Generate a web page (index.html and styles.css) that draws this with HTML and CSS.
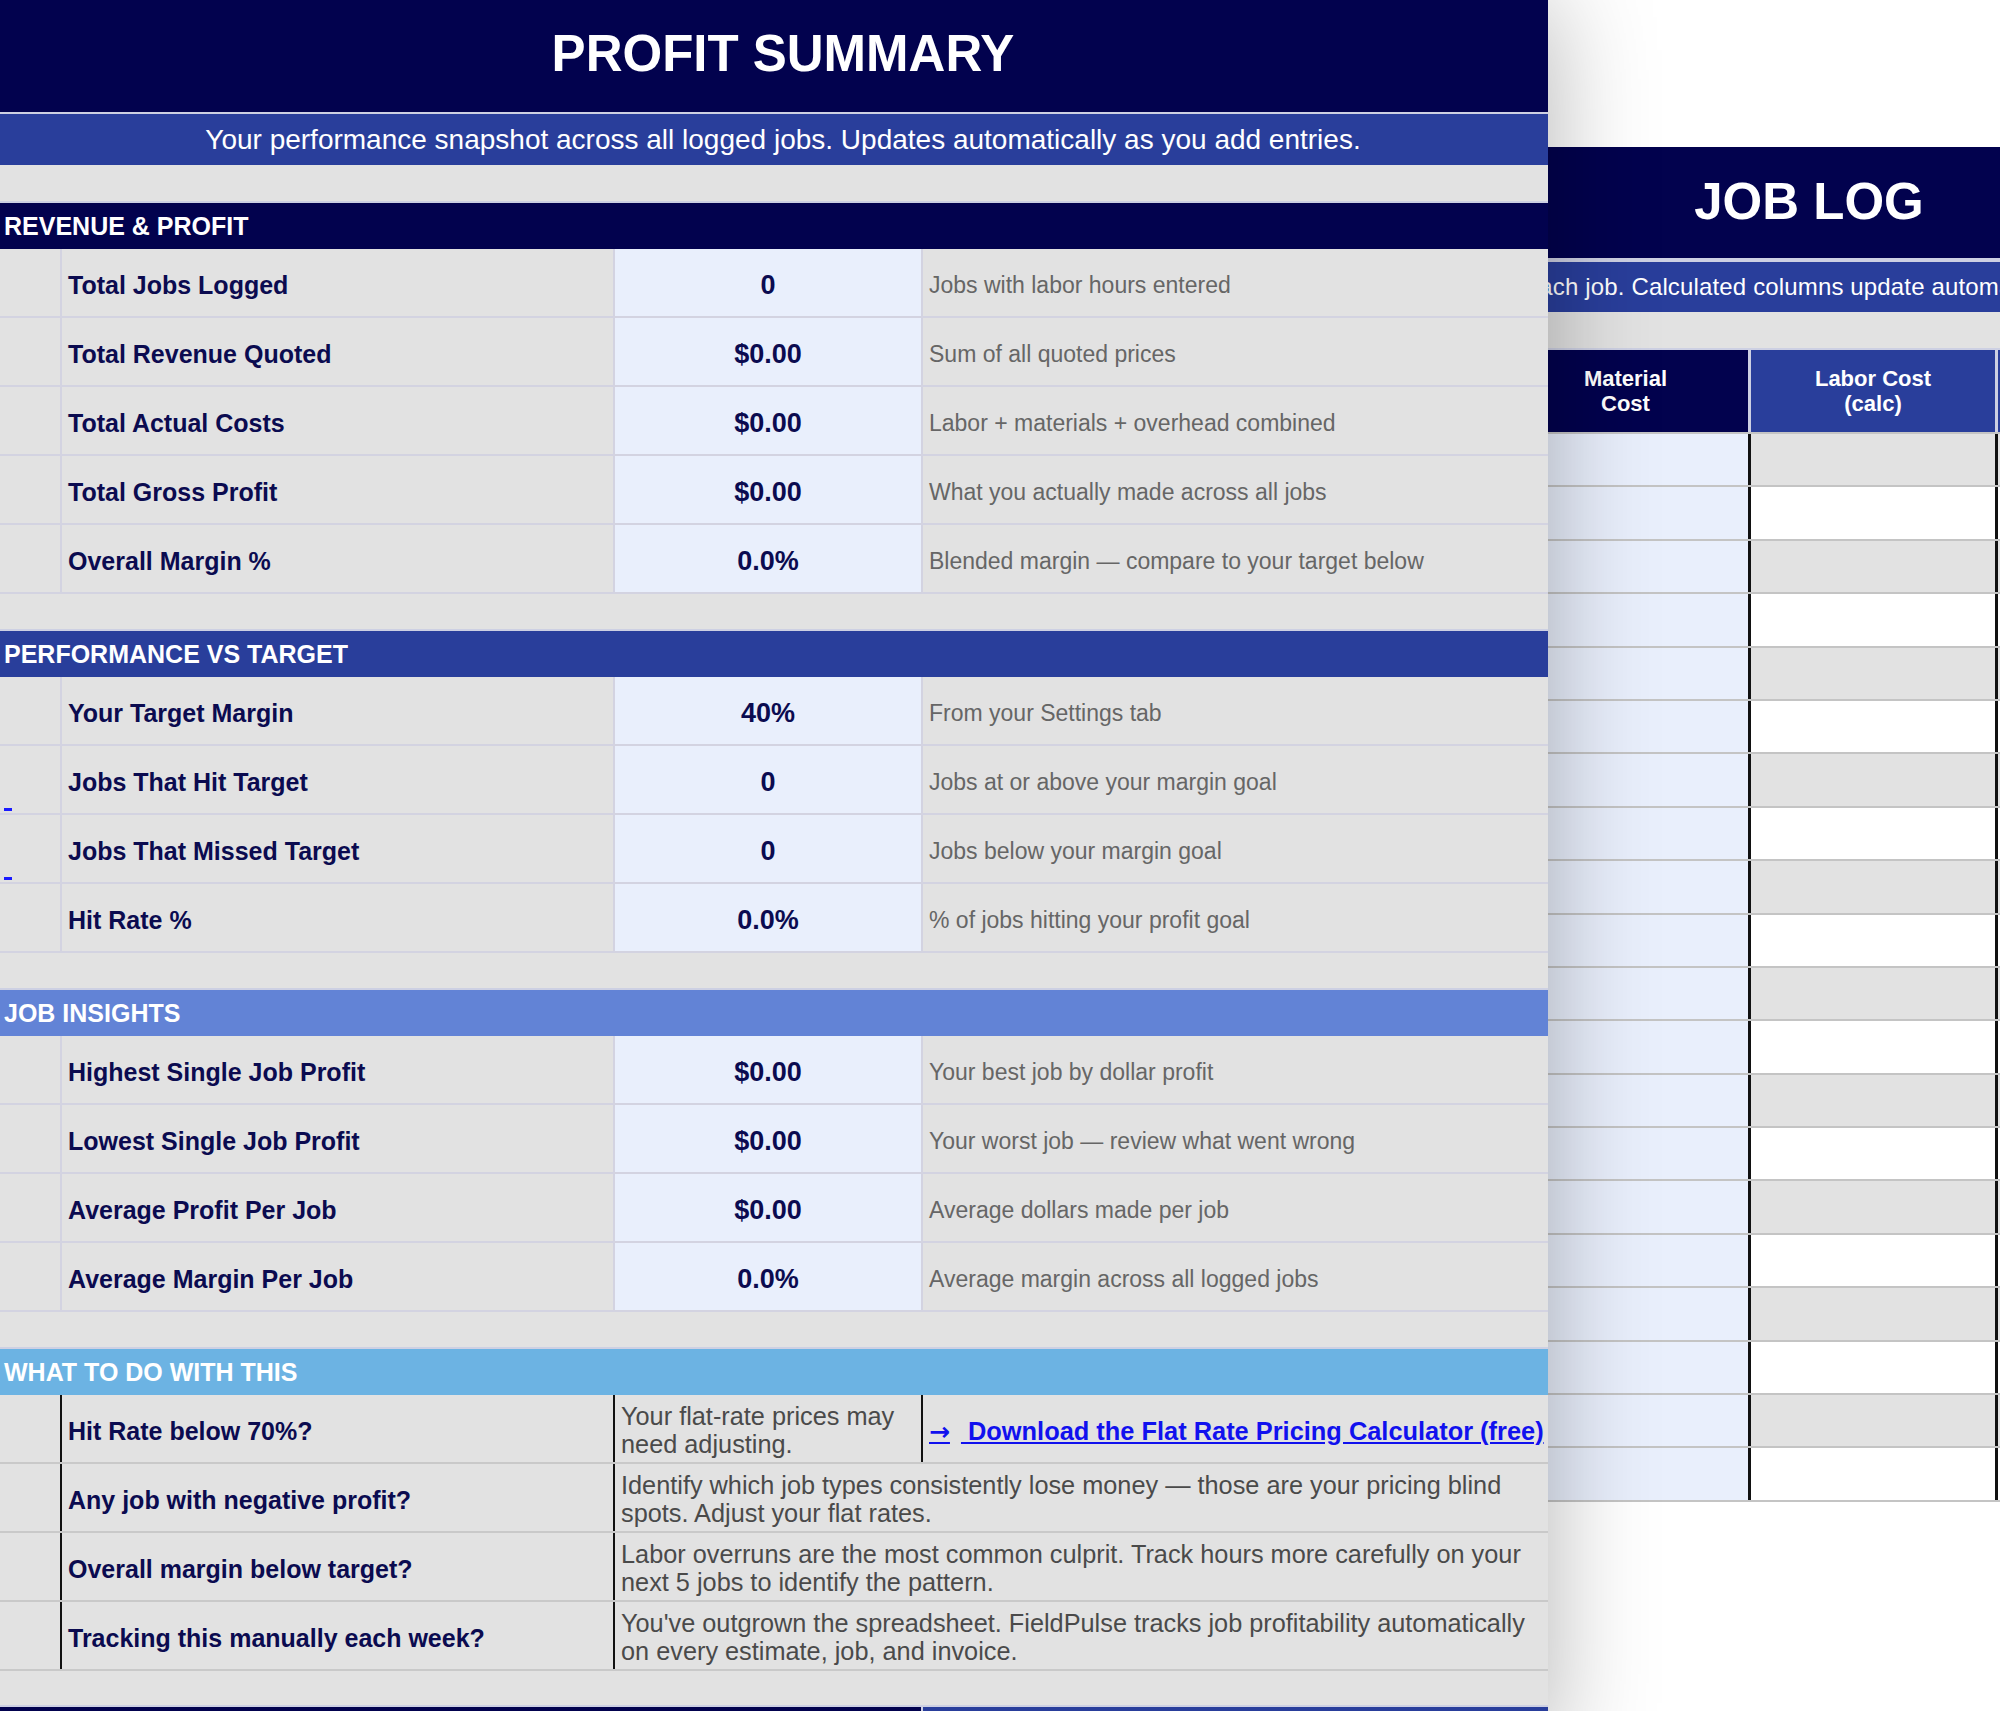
FILE: index.html
```html
<!DOCTYPE html>
<html lang="en">
<head>
<meta charset="utf-8">
<title>Profit Summary</title>
<link rel="stylesheet" href="styles.css">
</head>
<body>
<div class="main">
  <div class="title">PROFIT SUMMARY</div>
  <div class="subtitle">Your performance snapshot across all logged jobs. Updates automatically as you add entries.</div>
  <div class="gap gap-first"></div>

  <div class="sec-head navy">REVENUE &amp; PROFIT</div>
  <div class="row"><div class="ca"></div><div class="cb">Total Jobs Logged</div><div class="cc">0</div><div class="cd">Jobs with labor hours entered</div></div>
  <div class="row"><div class="ca"></div><div class="cb">Total Revenue Quoted</div><div class="cc">$0.00</div><div class="cd">Sum of all quoted prices</div></div>
  <div class="row"><div class="ca"></div><div class="cb">Total Actual Costs</div><div class="cc">$0.00</div><div class="cd">Labor + materials + overhead combined</div></div>
  <div class="row"><div class="ca"></div><div class="cb">Total Gross Profit</div><div class="cc">$0.00</div><div class="cd">What you actually made across all jobs</div></div>
  <div class="row"><div class="ca"></div><div class="cb">Overall Margin %</div><div class="cc">0.0%</div><div class="cd">Blended margin — compare to your target below</div></div>
  <div class="gap"></div>

  <div class="sec-head blue">PERFORMANCE VS TARGET</div>
  <div class="row"><div class="ca"></div><div class="cb">Your Target Margin</div><div class="cc">40%</div><div class="cd">From your Settings tab</div></div>
  <div class="row"><div class="ca"><span class="mark"></span></div><div class="cb">Jobs That Hit Target</div><div class="cc">0</div><div class="cd">Jobs at or above your margin goal</div></div>
  <div class="row"><div class="ca"><span class="mark"></span></div><div class="cb">Jobs That Missed Target</div><div class="cc">0</div><div class="cd">Jobs below your margin goal</div></div>
  <div class="row"><div class="ca"></div><div class="cb">Hit Rate %</div><div class="cc">0.0%</div><div class="cd">% of jobs hitting your profit goal</div></div>
  <div class="gap"></div>

  <div class="sec-head periwinkle">JOB INSIGHTS</div>
  <div class="row"><div class="ca"></div><div class="cb">Highest Single Job Profit</div><div class="cc">$0.00</div><div class="cd">Your best job by dollar profit</div></div>
  <div class="row"><div class="ca"></div><div class="cb">Lowest Single Job Profit</div><div class="cc">$0.00</div><div class="cd">Your worst job — review what went wrong</div></div>
  <div class="row"><div class="ca"></div><div class="cb">Average Profit Per Job</div><div class="cc">$0.00</div><div class="cd">Average dollars made per job</div></div>
  <div class="row"><div class="ca"></div><div class="cb">Average Margin Per Job</div><div class="cc">0.0%</div><div class="cd">Average margin across all logged jobs</div></div>
  <div class="gap"></div>

  <div class="sec-head sky">WHAT TO DO WITH THIS</div>
  <div class="wrow"><div class="wa"></div><div class="wb">Hit Rate below 70%?</div><div class="wc">Your flat-rate prices may need adjusting.</div><div class="wd"><span class="link"><span class="arrow">→</span> Download the Flat Rate Pricing Calculator (free)</span></div></div>
  <div class="wrow"><div class="wa"></div><div class="wb">Any job with negative profit?</div><div class="wspan">Identify which job types consistently lose money — those are your pricing blind spots. Adjust your flat rates.</div></div>
  <div class="wrow"><div class="wa"></div><div class="wb">Overall margin below target?</div><div class="wspan">Labor overruns are the most common culprit. Track hours more carefully on your next 5 jobs to identify the pattern.</div></div>
  <div class="wrow"><div class="wa"></div><div class="wb">Tracking this manually each week?</div><div class="wspan">You've outgrown the spreadsheet. FieldPulse tracks job profitability automatically on every estimate, job, and invoice.</div></div>
  <div class="gap gap-last"></div>
  <div class="foot"><div class="foot-a"></div><div class="foot-b"></div></div>
</div>

<div class="joblog">
  <div class="jl-title">JOB LOG</div>
  <div class="jl-sub">Log one row for each job. Calculated columns update automatically.</div>
  <div class="jl-gap"></div>
  <div class="jl-head">
    <div class="h-blank"></div>
    <div class="h-mat">Material<br>Cost</div>
    <div class="h-lab">Labor Cost<br>(calc)</div>
    <div class="h-next"></div>
  </div>
  <div class="jl-row odd"><div></div><div class="r-mat"></div><div class="r-lab"></div><div class="r-next"></div></div>
  <div class="jl-row even"><div></div><div class="r-mat"></div><div class="r-lab"></div><div class="r-next"></div></div>
  <div class="jl-row odd"><div></div><div class="r-mat"></div><div class="r-lab"></div><div class="r-next"></div></div>
  <div class="jl-row even"><div></div><div class="r-mat"></div><div class="r-lab"></div><div class="r-next"></div></div>
  <div class="jl-row odd"><div></div><div class="r-mat"></div><div class="r-lab"></div><div class="r-next"></div></div>
  <div class="jl-row even"><div></div><div class="r-mat"></div><div class="r-lab"></div><div class="r-next"></div></div>
  <div class="jl-row odd"><div></div><div class="r-mat"></div><div class="r-lab"></div><div class="r-next"></div></div>
  <div class="jl-row even"><div></div><div class="r-mat"></div><div class="r-lab"></div><div class="r-next"></div></div>
  <div class="jl-row odd"><div></div><div class="r-mat"></div><div class="r-lab"></div><div class="r-next"></div></div>
  <div class="jl-row even"><div></div><div class="r-mat"></div><div class="r-lab"></div><div class="r-next"></div></div>
  <div class="jl-row odd"><div></div><div class="r-mat"></div><div class="r-lab"></div><div class="r-next"></div></div>
  <div class="jl-row even"><div></div><div class="r-mat"></div><div class="r-lab"></div><div class="r-next"></div></div>
  <div class="jl-row odd"><div></div><div class="r-mat"></div><div class="r-lab"></div><div class="r-next"></div></div>
  <div class="jl-row even"><div></div><div class="r-mat"></div><div class="r-lab"></div><div class="r-next"></div></div>
  <div class="jl-row odd"><div></div><div class="r-mat"></div><div class="r-lab"></div><div class="r-next"></div></div>
  <div class="jl-row even"><div></div><div class="r-mat"></div><div class="r-lab"></div><div class="r-next"></div></div>
  <div class="jl-row odd"><div></div><div class="r-mat"></div><div class="r-lab"></div><div class="r-next"></div></div>
  <div class="jl-row even"><div></div><div class="r-mat"></div><div class="r-lab"></div><div class="r-next"></div></div>
  <div class="jl-row odd"><div></div><div class="r-mat"></div><div class="r-lab"></div><div class="r-next"></div></div>
  <div class="jl-row even"><div></div><div class="r-mat"></div><div class="r-lab"></div><div class="r-next"></div></div>
</div>
</body>
</html>
```

FILE: styles.css
```css
* { box-sizing: border-box; margin: 0; padding: 0; }
html, body { width: 2000px; height: 1711px; overflow: hidden; background: #ffffff; }
body { position: relative; font-family: "Liberation Sans", Arial, Helvetica, sans-serif; }

/* ---------- main sheet ---------- */
.main {
  position: relative;
  z-index: 2;
  width: 1548px;
  background: #e2e2e2;
  box-shadow: 0 0 100px rgba(0, 0, 0, 0.3);
}
.title {
  height: 114px;
  background: #02024e;
  border-bottom: 2px solid #cdd0e3;
  color: #fff;
  font-weight: bold;
  font-size: 51px;
  display: flex;
  align-items: center;
  justify-content: center;
  padding-left: 18px;
  padding-bottom: 5px;
}
.subtitle {
  height: 51px;
  background: #293e9b;
  color: #fff;
  font-size: 28px;
  display: flex;
  align-items: center;
  justify-content: center;
  padding-left: 18px;
  white-space: nowrap;
}
.gap { height: 35px; }
.gap-first { height: 36px; }
.gap-last { height: 34px; }

.sec-head {
  height: 48px;
  border-top: 2px solid #cdd0e3;
  color: #fff;
  font-weight: bold;
  font-size: 25px;
  display: flex;
  align-items: center;
  padding-left: 4px;
}
.navy { background: #02024e; }
.blue { background: #293e9b; }
.periwinkle { background: #6283d6; }
.sky { background: #6cb3e3; }

.row {
  display: grid;
  grid-template-columns: 62px 553px 308px 1fr;
  height: 69px;
  border-bottom: 2px solid #d3d3e1;
}
.ca {
  border-right: 2px solid #d3d3e1;
  display: flex;
  align-items: flex-end;
  padding: 0 0 2px 4px;
}
.mark { width: 8px; height: 3px; background: #1a1aff; }
.cb {
  border-right: 2px solid #d3d3e1;
  display: flex;
  align-items: center;
  padding: 5px 0 0 6px;
  color: #0b0b50;
  font-weight: bold;
  font-size: 25px;
}
.cc {
  background: #e9effc;
  border-right: 2px solid #d3d3e1;
  display: flex;
  align-items: center;
  justify-content: center;
  padding-top: 5px;
  color: #0b0b50;
  font-weight: bold;
  font-size: 27px;
}
.cd {
  display: flex;
  align-items: center;
  padding: 5px 0 0 6px;
  color: #666666;
  font-size: 23px;
  white-space: nowrap;
}

/* what to do rows */
.wrow {
  display: grid;
  grid-template-columns: 62px 553px 308px 1fr;
  height: 69px;
  border-bottom: 2px solid #c9c9c9;
}
.wa { border-right: 2px solid #111; }
.wb {
  border-right: 2px solid #111;
  display: flex;
  align-items: center;
  padding: 5px 0 0 6px;
  color: #0b0b50;
  font-weight: bold;
  font-size: 25px;
}
.wc, .wspan {
  display: flex;
  align-items: center;
  padding: 2px 6px 0 6px;
  color: #4a4a4a;
  font-size: 25.3px;
  line-height: 28px;
}
.wc { border-right: 2px solid #111; }
.wspan { grid-column: 3 / 5; }
.wd {
  display: flex;
  align-items: center;
  padding: 5px 0 0 6px;
  white-space: nowrap;
}
.link {
  color: #1111ee;
  font-weight: bold;
  font-size: 25.4px;
  text-decoration: underline;
}
.arrow {
  font-family: "DejaVu Sans", sans-serif;
  font-weight: bold;
  font-size: 25px;
  margin-right: 11px;
}

.foot { display: grid; grid-template-columns: 923px 1fr; height: 48px; border-top: 2px solid #cdd0e3; }
.foot-a { background: #02024e; border-right: 2px solid #cdd0e3; }
.foot-b { background: #293e9b; }

/* ---------- job log sheet (behind) ---------- */
.joblog {
  position: absolute;
  z-index: 1;
  left: 1300px;
  top: 147px;
  width: 1018px;
}
.jl-title {
  height: 115px;
  background: #02024e;
  border-bottom: 4px solid #cdd0e3;
  color: #fff;
  font-weight: bold;
  font-size: 51px;
  display: flex;
  align-items: center;
  justify-content: center;
  padding-bottom: 2px;
}
.jl-sub {
  height: 50px;
  background: #293e9b;
  color: #fff;
  font-size: 24px;
  display: flex;
  align-items: center;
  padding-left: 50px;
  white-space: nowrap;
  letter-spacing: 0.15px;
}
.jl-gap { height: 36px; background: #e2e2e2; }
.jl-head {
  display: grid;
  grid-template-columns: 203px 248px 247px 1fr;
  height: 86px;
  border-top: 2px solid #cdd0e3;
  border-bottom: 2px solid #c4c4c4;
  background: #e2e2e2;
}
.h-mat, .h-lab {
  display: flex;
  align-items: center;
  justify-content: center;
  text-align: center;
  color: #fff;
  font-weight: bold;
  font-size: 22px;
  line-height: 25px;
  border-right: 3px solid #cdd0e3;
}
.h-mat { background: #02024e; }
.h-lab { background: #293e9b; }
.h-next { background: #293e9b; }

.jl-row {
  display: grid;
  grid-template-columns: 203px 248px 247px 1fr;
  height: 53.4px;
  border-bottom: 2px solid #c4c4c4;
}
.r-mat { background: #e9effc; border-right: 3px solid #111; }
.r-lab { border-right: 3px solid #111; }
.odd .r-lab, .odd .r-next { background: #e2e2e2; }
.even .r-lab, .even .r-next { background: #ffffff; }
```
